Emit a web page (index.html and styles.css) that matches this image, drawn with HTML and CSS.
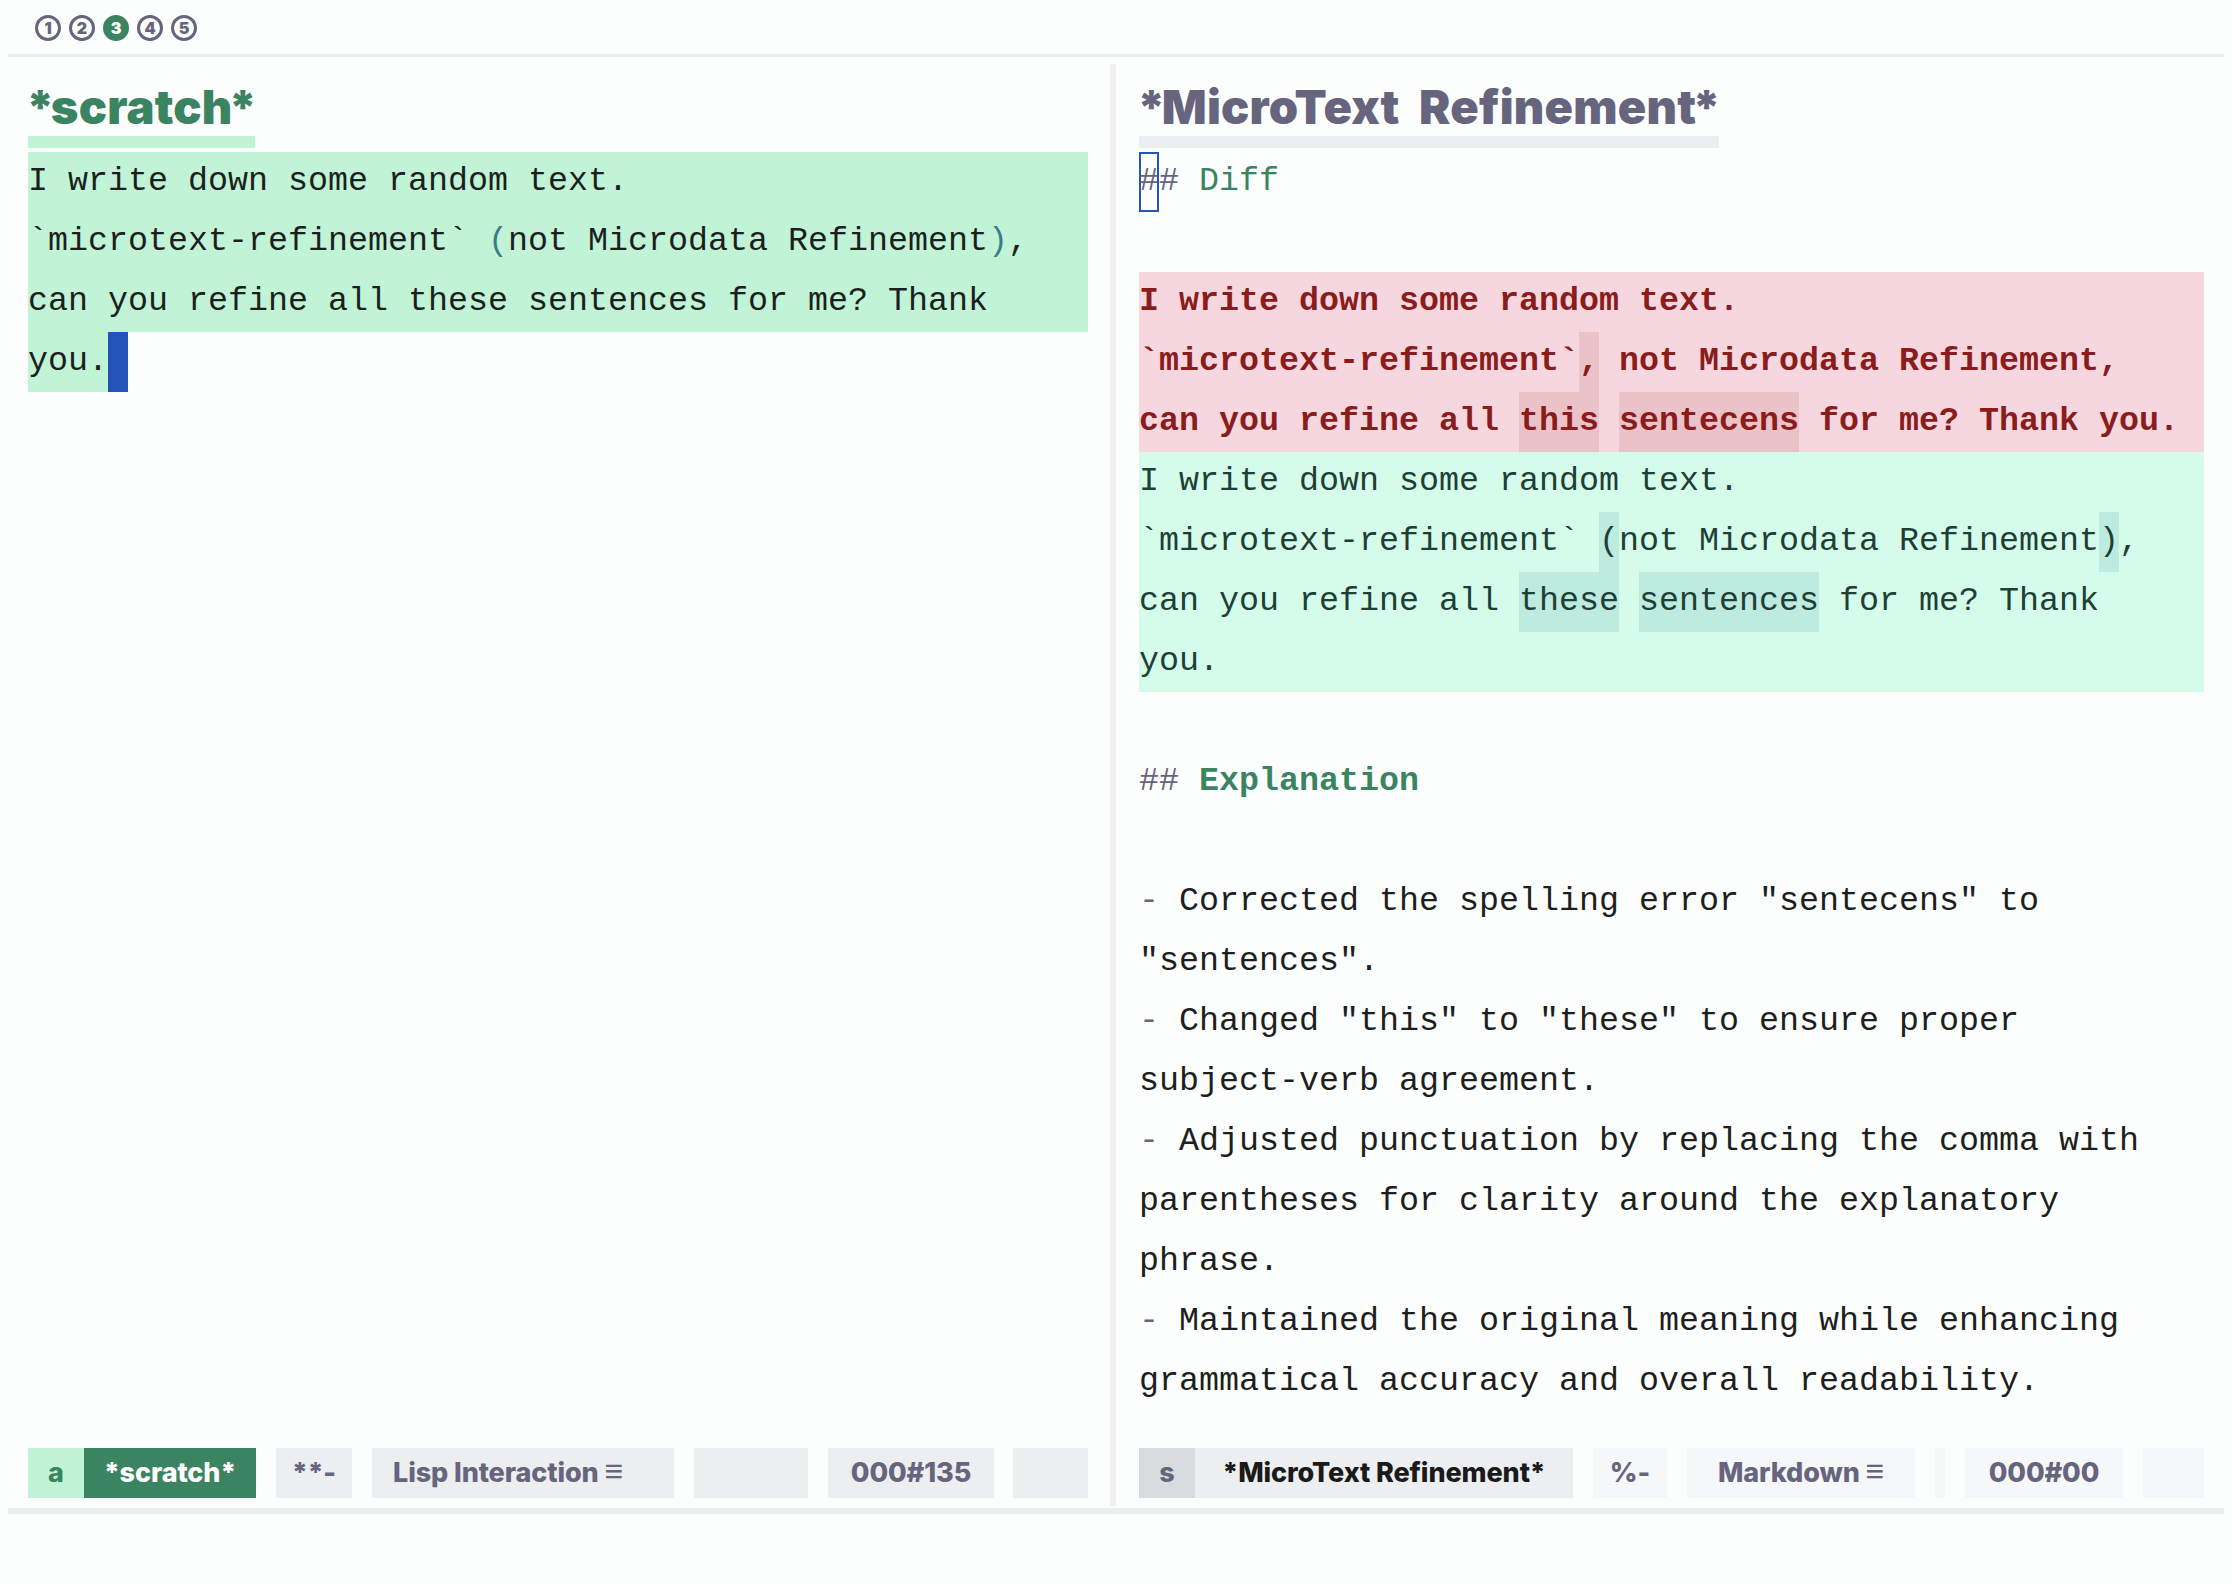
FILE: index.html
```html
<!DOCTYPE html>
<html lang="en">
<head>
<meta charset="utf-8">
<title>MicroText Refinement</title>
<link rel="stylesheet" href="styles.css">
</head>
<body>
<div class="app">
  <div class="tabs">
    <span class="tab">1</span>
    <span class="tab">2</span>
    <span class="tab tab-active">3</span>
    <span class="tab">4</span>
    <span class="tab">5</span>
  </div>
  <div class="workspace">
    <section class="pane pane-left">
      <header class="pane-header">
        <h1 class="title title-active"><span class="star-l">*</span>scratch<span class="star-r">*</span></h1>
      </header>
      <div class="buffer">
        <div class="region">
          <div class="line">I write down some random text.</div>
          <div class="line">`microtext-refinement` <span class="paren">(</span>not Microdata Refinement<span class="paren">)</span>,</div>
          <div class="line">can you refine all these sentences for me? Thank</div>
        </div>
        <div class="line"><span class="region-tail">you.</span><span class="cursor-block"></span></div>
      </div>
      <footer class="modeline">
        <span class="seg seg-key-active w56">a</span>
        <span class="seg seg-name-active w172">*scratch*</span>
        <span class="seg seg-dim w76 gap">**-</span>
        <span class="seg seg-dim w302 gap left">Lisp Interaction <span class="menu">≡</span></span>
        <span class="seg seg-dim w114 gap"></span>
        <span class="seg seg-dim w166 gap">000#135</span>
        <span class="seg seg-dim grow gap19"></span>
      </footer>
    </section>
    <div class="divider"></div>
    <section class="pane pane-right">
      <header class="pane-header">
        <h1 class="title title-inactive"><span class="star-l">*</span>MicroText Refinement<span class="star-r">*</span></h1>
      </header>
      <div class="buffer">
        <div class="line"><span class="hash"><span class="cursor-box">#</span>#</span> <span class="md-h">Diff</span></div>
        <div class="line"></div>
        <div class="diff-old">
          <div class="line">I write down some random text.</div>
          <div class="line">`microtext-refinement`<span class="hl-old">,</span> not Microdata Refinement,</div>
          <div class="line">can you refine all <span class="hl-old">this</span> <span class="hl-old">sentecens</span> for me? Thank you.</div>
        </div>
        <div class="diff-new">
          <div class="line">I write down some random text.</div>
          <div class="line">`microtext-refinement` <span class="hl-new">(</span>not Microdata Refinement<span class="hl-new">)</span>,</div>
          <div class="line">can you refine all <span class="hl-new">these</span> <span class="hl-new">sentences</span> for me? Thank</div>
          <div class="line">you.</div>
        </div>
        <div class="line"></div>
        <div class="line"><span class="hash">##</span> <span class="md-h md-bold">Explanation</span></div>
        <div class="line"></div>
        <div class="line"><span class="dash">-</span> Corrected the spelling error "sentecens" to</div>
        <div class="line">"sentences".</div>
        <div class="line"><span class="dash">-</span> Changed "this" to "these" to ensure proper</div>
        <div class="line">subject-verb agreement.</div>
        <div class="line"><span class="dash">-</span> Adjusted punctuation by replacing the comma with</div>
        <div class="line">parentheses for clarity around the explanatory</div>
        <div class="line">phrase.</div>
        <div class="line"><span class="dash">-</span> Maintained the original meaning while enhancing</div>
        <div class="line">grammatical accuracy and overall readability.</div>
      </div>
      <footer class="modeline">
        <span class="seg seg-key w56">s</span>
        <span class="seg seg-name w378">*MicroText Refinement*</span>
        <span class="seg seg-faint w74 gap">%-</span>
        <span class="seg seg-faint w228 gap">Markdown <span class="menu">≡</span></span>
        <span class="seg seg-faint w10 gap"></span>
        <span class="seg seg-faint w158 gap">000#00</span>
        <span class="seg seg-faint grow gap"></span>
      </footer>
    </section>
  </div>
</div>
</body>
</html>
```

FILE: styles.css
```css
* { box-sizing: border-box; }

html, body {
  margin: 0;
  padding: 0;
  background: #fcfdfd;
}

body {
  width: 2232px;
  height: 1584px;
  overflow: hidden;
  font-family: "Liberation Mono", "DejaVu Sans Mono", monospace;
}

.app {
  padding: 0 8px;
}

/* workspace tabs */
.tabs {
  height: 54px;
  display: flex;
  align-items: center;
  gap: 8px;
  padding-left: 27px;
  padding-top: 2px;
}

.tab {
  width: 26px;
  height: 26px;
  border-radius: 50%;
  border: 3.5px solid #67647e;
  color: #67647e;
  font: 900 16px/19px Inter, "Liberation Sans", sans-serif;
  display: flex;
  align-items: center;
  justify-content: center;
}

.tab-active {
  background: #3b8462;
  border-color: #3b8462;
  color: #ffffff;
}

/* main area */
.workspace {
  border-top: 3px solid #eceef0;
  border-bottom: 6px solid #ecedef;
  height: 1460px;
  display: flex;
  padding-top: 7px;
}

.divider {
  width: 6px;
  background: #efefef;
  margin-bottom: 2px;
}

.pane {
  display: flex;
  flex-direction: column;
  padding-bottom: 10px;
}

.pane-left {
  width: 1102px;
  padding-left: 20px;
  padding-right: 22px;
}

.pane-right {
  flex: 1;
  padding-left: 23px;
  padding-right: 20px;
}

.pane-header {
  height: 88px;
  padding-top: 20px;
}

.title {
  margin: 0;
  width: fit-content;
  white-space: nowrap;
  font: 900 47px/46px Inter, "Liberation Sans", sans-serif;
  letter-spacing: 0.2px;
  word-spacing: 10px;
  padding-bottom: 6px;
  border-bottom: 12px solid;
}

.star-l { margin-left: -2px; margin-right: -4px; }
.star-r { margin-left: -4px; margin-right: -2px; }

.title-active {
  color: #3b8462;
  border-bottom-color: #c1f3d6;
}

.title-inactive {
  color: #67647e;
  border-bottom-color: #eceef0;
}

/* text buffer */
.buffer {
  flex: 1;
  font-size: 33.33px;
  color: #1c1f1e;
}

.line {
  height: 60px;
  line-height: 58px;
  white-space: pre;
}

.region {
  background: #c1f3d6;
}

.region-tail {
  display: inline-block;
  height: 60px;
  vertical-align: top;
  background: #c1f3d6;
}

.cursor-block {
  display: inline-block;
  width: 20px;
  height: 60px;
  vertical-align: top;
  background: #2355b8;
}

.paren {
  color: #3a7b8c;
}

.hash {
  color: #67647e;
}

.cursor-box {
  display: inline-block;
  height: 60px;
  vertical-align: top;
  outline: 2px solid #2355b8;
  outline-offset: -2px;
}

.md-h {
  color: #3b8462;
}

.md-bold {
  font-weight: 700;
}

.dash {
  color: #67647e;
}

.diff-old {
  background: #f7d7df;
  color: #8a1c1c;
  font-weight: 700;
}

.diff-new {
  background: #d5fcea;
  color: #1d3f36;
}

.hl-old,
.hl-new {
  display: inline-block;
  height: 60px;
  vertical-align: top;
}

.hl-old { background: #ecc2c9; }
.hl-new { background: #bdebdf; }

/* mode line */
.modeline {
  display: flex;
  height: 50px;
  font: 800 27px/50px Inter, "Liberation Sans", sans-serif;
  letter-spacing: -0.1px;
  color: #67647e;
}

.seg {
  display: block;
  text-align: center;
  white-space: pre;
  overflow: hidden;
}

.seg .menu {
  font-size: 32px;
  font-weight: 700;
  line-height: 0;
}

.seg.left { text-align: left; padding-left: 21px; }

.gap { margin-left: 20px; }
.gap19 { margin-left: 19px; }
.grow { flex: 1; }

.w10 { width: 10px; }
.w56 { width: 56px; }
.w74 { width: 74px; }
.w76 { width: 76px; }
.w114 { width: 114px; }
.w158 { width: 158px; }
.w166 { width: 166px; }
.w172 { width: 172px; }
.w228 { width: 228px; }
.w302 { width: 302px; }
.w378 { width: 378px; }

.seg-key-active { background: #c1f3d6; color: #3b8462; }
.seg-name-active { background: #3b8462; color: #ffffff; }
.seg-dim { background: #eceef0; }
.seg-key { background: #d9dcdf; }
.seg-name { background: #eceef0; color: #1a1a1a; }
.seg-faint { background: #f6f7f8; }
```
